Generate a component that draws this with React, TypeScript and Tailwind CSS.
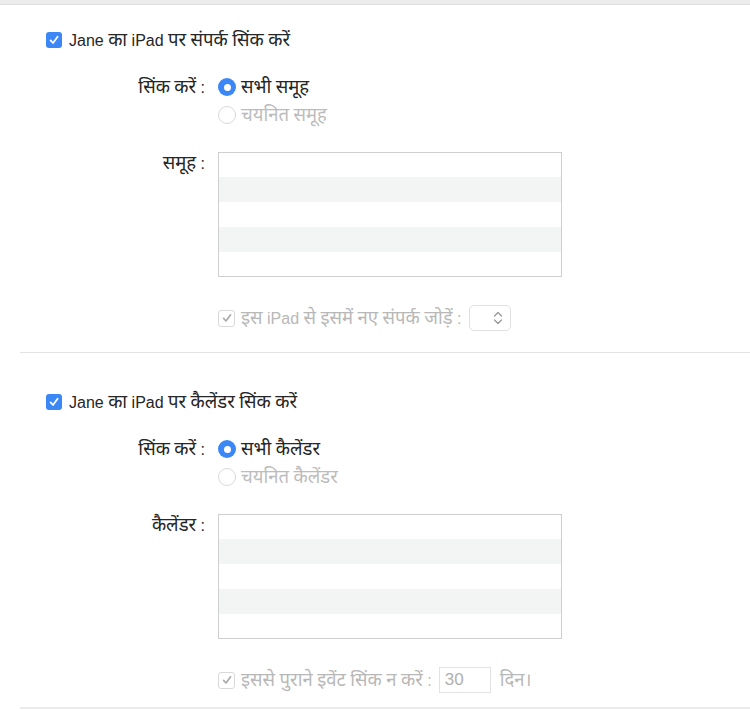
import React from "react";

const FONT = { fontFamily: '"Helvetica Neue", "Liberation Sans", "Noto Sans", "Noto Sans Devanagari", "Lohit Devanagari", sans-serif' };

function Hi({ text }: { text: string }) {
  const parts = text.split(/([\u0900-\u097F]+)/);
  return (
    <>
      {parts.map((p, i) =>
        /[\u0900-\u097F]/.test(p) ? (
          <span key={i} className="text-[18.5px]">
            {p}
          </span>
        ) : (
          <span key={i}>{p}</span>
        )
      )}
    </>
  );
}

function BlueCheck() {
  return (
    <span className="flex h-[16px] w-[16px] shrink-0 items-center justify-center rounded-[3px] bg-[#3b87f6]">
      <svg width="12" height="12" viewBox="0 0 12 12" fill="none">
        <path d="M2.6 6.4 L5 9 L9.6 2.8" stroke="white" strokeWidth="1.8" strokeLinecap="round" strokeLinejoin="round" />
      </svg>
    </span>
  );
}

function GrayCheck() {
  return (
    <span className="flex h-[17px] w-[17px] shrink-0 items-center justify-center rounded-[3px] border border-[#d9d9d9] bg-white">
      <svg width="12" height="12" viewBox="0 0 12 12" fill="none">
        <path d="M2.6 6.4 L5 9 L9.6 2.8" stroke="#a8a8a8" strokeWidth="1.6" strokeLinecap="round" strokeLinejoin="round" />
      </svg>
    </span>
  );
}

function RadioOn() {
  return (
    <span className="flex h-[18px] w-[18px] shrink-0 items-center justify-center rounded-full bg-[#3b87f6]">
      <span className="h-[7px] w-[7px] rounded-full bg-white" />
    </span>
  );
}

function RadioOff() {
  return <span className="h-[18px] w-[18px] shrink-0 rounded-full border border-[#dadada] bg-white" />;
}

function ListBox() {
  return (
    <div className="flex h-[125px] w-[344px] flex-col border border-[#cfcfcf] bg-white">
      <div className="h-[24px]" />
      <div className="h-[25px] bg-[#f3f4f4]" />
      <div className="h-[25px]" />
      <div className="h-[25px] bg-[#f3f4f4]" />
      <div className="flex-1" />
    </div>
  );
}

function Section({
  title,
  all,
  selected,
  listLabel,
  pt,
  bottom,
}: {
  title: string;
  all: string;
  selected: string;
  listLabel: string;
  pt: string;
  bottom: React.ReactNode;
}) {
  return (
    <div className={`flex flex-col ${pt}`}>
      <div className="flex h-[24px] items-center gap-[7px] pl-[26px]">
        <BlueCheck />
        <span className="whitespace-nowrap text-[16px] leading-[24px] text-[#262626]">
          <Hi text={title} />
        </span>
      </div>
      <div className="mt-[23px] flex h-[24px] items-center">
        <span className="w-[186px] whitespace-nowrap pr-[1px] text-right text-[16px] leading-[24px] text-[#262626]">
          <Hi text="सिंक करें :" />
        </span>
        <div className="ml-[12px] flex items-center gap-[5px]">
          <RadioOn />
          <span className="whitespace-nowrap text-[16px] leading-[24px] text-[#262626]">
            <Hi text={all} />
          </span>
        </div>
      </div>
      <div className="mt-[4px] flex h-[24px] items-center">
        <span className="w-[186px]" />
        <div className="ml-[12px] flex items-center gap-[5px]">
          <RadioOff />
          <span className="whitespace-nowrap text-[16px] leading-[24px] text-[#bcbcbc]">
            <Hi text={selected} />
          </span>
        </div>
      </div>
      <div className="mt-[25px] flex">
        <span className="w-[186px] whitespace-nowrap pr-[1px] text-right text-[16px] leading-[22px] text-[#262626]">
          <Hi text={listLabel} />
        </span>
        <div className="ml-[12px]">
          <ListBox />
        </div>
      </div>
      <div className="mt-[28px] flex h-[26px] items-center">
        <span className="w-[186px]" />
        <div className="ml-[12px] flex items-center">{bottom}</div>
      </div>
    </div>
  );
}

export default function App() {
  return (
    <div className="h-[710px] w-[750px] overflow-hidden bg-white" style={FONT}>
      <div className="h-[5px] border-b border-[#dedede] bg-[#ececec]" />
      <div className="ml-[20px] flex flex-col">
        <Section
          title="Jane का iPad पर संपर्क सिंक करें"
          all="सभी समूह"
          selected="चयनित समूह"
          listLabel="समूह :"
          pt="pt-[23px]"
          bottom={
            <>
              <GrayCheck />
              <span className="ml-[6px] whitespace-nowrap text-[16px] leading-[24px] text-[#b8b8b8]">
                <Hi text="इस iPad से इसमें नए संपर्क जोड़ें :" />
              </span>
              <div className="ml-[7px] flex h-[26px] w-[42px] items-center justify-end rounded-[5px] border border-[#e0e0e0] bg-white pr-[6px]">
                <svg width="12" height="18" viewBox="0 0 12 18" fill="none">
                  <path d="M2.5 7 L6 3.5 L9.5 7" stroke="#9a9a9a" strokeWidth="1.4" strokeLinecap="round" strokeLinejoin="round" />
                  <path d="M2.5 11 L6 14.5 L9.5 11" stroke="#9a9a9a" strokeWidth="1.4" strokeLinecap="round" strokeLinejoin="round" />
                </svg>
              </div>
            </>
          }
        />
        <div className="mt-[21px] h-[1px] bg-[#e2e2e2]" />
        <Section
          title="Jane का iPad पर कैलेंडर सिंक करें"
          all="सभी कैलेंडर"
          selected="चयनित कैलेंडर"
          listLabel="कैलेंडर :"
          pt="pt-[37px]"
          bottom={
            <>
              <GrayCheck />
              <span className="ml-[6px] whitespace-nowrap text-[16px] leading-[24px] text-[#b8b8b8]">
                <Hi text="इससे पुराने इवेंट सिंक न करें :" />
              </span>
              <div className="ml-[7px] flex h-[26px] w-[52px] items-center border border-[#e2e2e2] bg-white pl-[5px] text-[17px] text-[#b0b0b0]">
                30
              </div>
              <span className="ml-[9px] whitespace-nowrap text-[16px] leading-[24px] text-[#b8b8b8]">
                <Hi text="दिन।" />
              </span>
            </>
          }
        />
        <div className="mt-[14px] h-[2px] bg-[#ebebeb]" />
      </div>
    </div>
  );
}
